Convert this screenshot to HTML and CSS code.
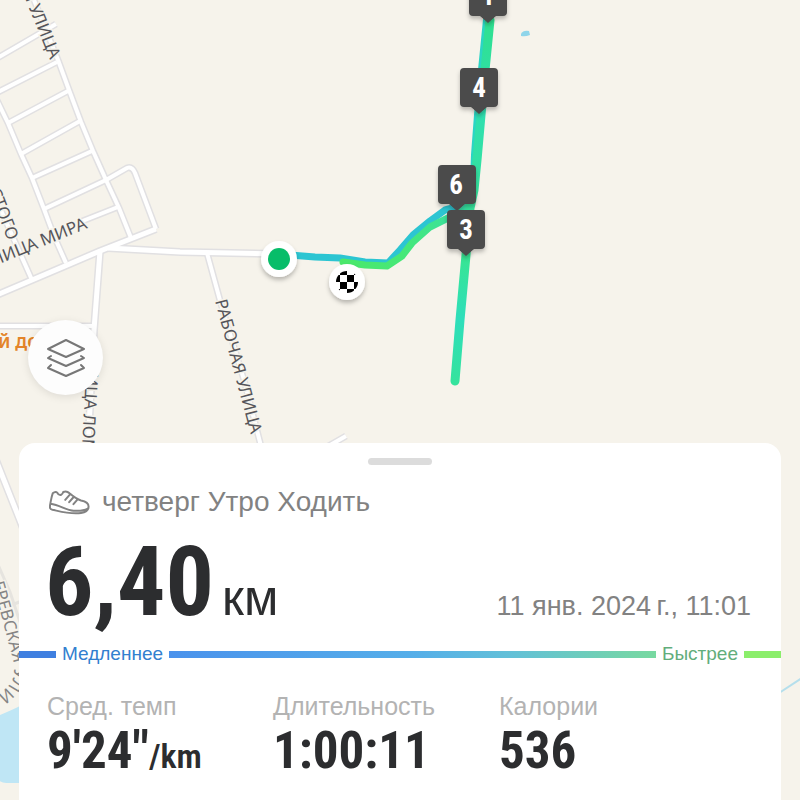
FILE: index.html
```
<!DOCTYPE html>
<html lang="ru">
  <head>
    <meta charset="UTF-8" />
    <meta name="viewport" content="width=device-width, initial-scale=1.0" />
    <title>четверг Утро Ходить</title>
    <link rel="stylesheet" href="styles.css">
  </head>

  <body>
    <main class="screen">
      <svg class="map" viewBox="0 0 800 800" preserveAspectRatio="xMidYMin slice">
        <defs>
          <linearGradient id="main-track" gradientUnits="userSpaceOnUse" x1="0" y1="20" x2="0" y2="385">
            <stop offset="0" stop-color="#2fe08f" />
            <stop offset="0.25" stop-color="#2fdfb0" />
            <stop offset="0.45" stop-color="#34e29f" />
            <stop offset="0.65" stop-color="#38e594" />
            <stop offset="0.82" stop-color="#2edebb" />
            <stop offset="1" stop-color="#35e39c" />
          </linearGradient>
          <linearGradient id="back-track" gradientUnits="userSpaceOnUse" x1="340" y1="0" x2="466" y2="0">
            <stop offset="0" stop-color="#4be86a" />
            <stop offset="0.5" stop-color="#46e878" />
            <stop offset="1" stop-color="#36dfa8" />
          </linearGradient>
          <filter id="shadow" x="-40%" y="-40%" width="180%" height="190%">
            <feDropShadow dx="0" dy="3" stdDeviation="2" flood-color="#000" flood-opacity="0.25" />
          </filter>
          <clipPath id="ball"><circle r="11" /></clipPath>
          <g id="pin" filter="url(#shadow)">
            <path d="M-15 -46H15Q19 -46 19 -42V-11Q19 -7 15 -7H8L0 0L-8 -7H-15Q-19 -7 -19 -11V-42Q-19 -46 -15 -46Z" />
          </g>
          <!-- streets, drawn twice: casing and filling -->
          <g id="streets">
            <path d="M28 -15L58 60L69 90L81 122L93 151L106 180L119 208L131 238" />
            <path d="M-6 60L56 24M-6 94L57 62M8 123L68 91M21 154L80 121M32 178L92 151M44 209L106 180L127 168Q132 166 135 173L156 229M80 222L118 207" />
            <path d="M-6 94L8 123L21 154L32 178L44 209L54 236L66 263M0 208L32 280" />
            <path d="M207 253L221 304L244 380L262 450M325 448L346 436" />
            <path d="M-6 326H92" />
          </g>
          <g id="avenues">
            <path d="M-8 297L65 266L100 251L156 229" />
            <path d="M108 248L180 252L280 254M100 251L94 330L88 446M-8 450L19 518L30 546" />
          </g>
        </defs>

        <path class="water" d="M-5 717Q10 711 20 706L24 783H8Q0 784 -5 776Z" />
        <path class="stream" d="M776 695L805 676" />
        <path class="pond" d="M521 34Q523 30 529 31L530 35Q525 37 521 36Z" />
        <path class="railway" d="M-4 560L10 592L20 622M6 607L22 601" />

        <use href="#streets" class="casing" />
        <use href="#avenues" class="casing wide" />
        <use href="#streets" class="filling" />
        <use href="#avenues" class="filling wide" />

        <g class="street-names">
          <text transform="translate(50 60) rotate(68)" text-anchor="end">Я УЛИЦА</text>
          <text transform="translate(88 228) rotate(-22)" text-anchor="end">ЛИЦА МИРА</text>
          <text transform="translate(8 241) rotate(69)" text-anchor="end">СТОГО</text>
          <text transform="translate(215 301) rotate(75)">РАБОЧАЯ УЛИЦА</text>
          <text transform="translate(86 373) rotate(93)">ИЦА ЛОМ</text>
          <path id="bend" fill="none" d="M-8 583L3 622L11 653C17 670 14 680 7 687L-24 716" />
          <text class="faint"><textPath href="#bend">ЕРЕВСКАЯ УЛИ</textPath></text>
        </g>
        <text class="place" x="-2" y="348">й дом</text>

        <path class="track out" d="M290 255L315 257L340 258L365 262L388 263L400 250L413 235L430 221L445 210L460 206" />
        <path class="track back" d="M343 262L365 265L387 266L402 256L412 243L430 227L450 217L468 206" />
        <path class="track edge" d="M487 20L482 70L478 115L475 155L474 185" />
        <path class="track main" d="M490 20L485 70L481 115L477 160L474 190L470 208L466 255L460 320L455 381" />

        <use href="#pin" x="488" y="23" class="pin" />
        <text class="pin-number" x="488" y="5">1</text>
        <use href="#pin" x="479" y="114" class="pin" />
        <text class="pin-number" x="479" y="97">4</text>
        <use href="#pin" x="457" y="211" class="pin" />
        <text class="pin-number" x="456" y="194">6</text>
        <use href="#pin" x="466" y="256" class="pin" />
        <text class="pin-number" x="466" y="239">3</text>

        <!-- start and finish -->
        <g transform="translate(279 259)">
          <circle class="dot" r="18" filter="url(#shadow)" />
          <circle class="start" r="11" />
        </g>
        <g transform="translate(347 282)">
          <circle class="dot" r="18" filter="url(#shadow)" />
          <g clip-path="url(#ball)">
            <path class="checks" d="M0 -7H7V0H0ZM-7 0H0V7H-7ZM-7 -15H0V-7H-7ZM-15 -7H-7V0H-15ZM7 0H15V7H7ZM0 7H7V15H0ZM7 -15H15V-7H7ZM-15 7H-7V15H-15Z" />
          </g>
        </g>
      </svg>

      <button class="layers" type="button" aria-label="Слои">
        <svg viewBox="0 0 40 40">
          <path d="M20 2L38 11L20 19L2 11ZM5 18L2 20L20 28L38 20L35 18M5 27L2 30L20 38L38 30L35 27" />
        </svg>
      </button>

      <section class="sheet">
        <div class="handle"></div>

        <header class="title">
          <svg class="shoe" viewBox="148 174 124 76">
            <path d="M152 214C149 228 150 232 158 234C185 240 210 248 245 244C260 242 268 236 268 224C268 212 255 208 245 206C232 202 222 194 210 184C204 178 198 177 191 180C188 189 182 191 176 187C173 179 166 178 159 184C155 195 154 205 152 214ZM152 216C180 220 200 235 222 237C240 238 255 238 267 230M197 204L211 188M209 211L222 196M222 217L234 203" />
          </svg>
          <h1>четверг Утро Ходить</h1>
        </header>

        <div class="summary">
          <p class="distance">6,40<span>км</span></p>
          <time datetime="2024-01-11T11:01">11 янв. 2024&#8239;г., 11:01</time>
        </div>

        <div class="pace">
          <i class="bar slow"></i>
          <span class="slower">Медленнее</span>
          <i class="bar middle"></i>
          <span class="faster">Быстрее</span>
          <i class="bar fast"></i>
        </div>

        <dl class="stats">
          <div>
            <dt>Сред. темп</dt>
            <dd>9'24"<small>/km</small></dd>
          </div>
          <div>
            <dt>Длительность</dt>
            <dd>1:00:11</dd>
          </div>
          <div>
            <dt>Калории</dt>
            <dd>536</dd>
          </div>
        </dl>
      </section>
    </main>
  </body>
</html>
```
FILE: styles.css
```
* {
  box-sizing: border-box;
  margin: 0;
}

body {
  font-family: "Liberation Sans", Arial, sans-serif;
  color: #2c2d2f;
  background-color: #f6f3eb;
}

/* the sheet lies over the map, both in the same grid cell */
.screen {
  display: grid;
  position: relative;
  height: 100vh;
  overflow: hidden;
}

.map {
  grid-area: 1 / 1;
  width: 100%;
  height: 100%;
}

.casing,
.filling,
.track {
  fill: none;
  stroke-linejoin: round;
}

.casing {
  stroke: #e1e0e2;
  stroke-width: 7px;
}

.filling {
  stroke: #fff;
  stroke-width: 4px;
}

.casing.wide {
  stroke-width: 8px;
}

.filling.wide {
  stroke-width: 5px;
}

.water {
  fill: #bfe6f5;
}

.pond {
  fill: #8fd5ea;
}

.stream {
  stroke: #b5dfec;
  stroke-width: 2px;
}

.railway {
  fill: none;
  stroke: #e6e4df;
  stroke-width: 3px;
}

.street-names {
  font-family: "Noto Sans", sans-serif;
  font-size: 17px;
  fill: #55555a;
  stroke: #f6f3eb;
  stroke-width: 3px;
  paint-order: stroke;
}

.street-names path {
  stroke: none;
}

.street-names .faint {
  fill: #858585;
}

.place {
  font-family: "Noto Sans", sans-serif;
  font-size: 19px;
  font-weight: 600;
  fill: #e38428;
}

.track {
  stroke-linecap: round;
}

.out {
  stroke: #2cc5d2;
  stroke-width: 7px;
}

.back {
  stroke: url(#back-track);
  stroke-width: 7px;
}

.edge {
  stroke: #2bd5c4;
  stroke-width: 8px;
}

.main {
  stroke: url(#main-track);
  stroke-width: 9px;
}

.pin {
  fill: #4b4b4b;
}

.pin-number {
  font-family: "Roboto Condensed", "Liberation Sans", sans-serif;
  font-size: 27px;
  font-weight: bold;
  text-anchor: middle;
  fill: #fff;
}

.dot {
  fill: #fff;
}

.start {
  fill: #07bd69;
}

.checks {
  fill: #000;
}

.layers {
  position: absolute;
  top: 320px;
  left: 28px;
  display: grid;
  place-items: center;
  width: 75px;
  height: 75px;
  padding: 0;
  border: 0;
  border-radius: 50%;
  background-color: #fdfdfd;
  box-shadow: 0 2px 8px rgba(0, 0, 0, 0.1);
}

.layers svg {
  width: 40px;
  height: 40px;
  fill: none;
  stroke: #777;
  stroke-width: 2px;
  stroke-linecap: round;
  stroke-linejoin: round;
}

.sheet {
  grid-area: 1 / 1;
  align-self: end;
  position: relative;
  margin: 0 19px;
  padding: 15px 0 23px;
  border-radius: 16px 16px 0 0;
  background-color: #fff;
}

.handle {
  width: 64px;
  height: 7px;
  margin: 0 auto 21px;
  border-radius: 4px;
  background-color: #dcdcdc;
}

.title {
  display: flex;
  align-items: center;
  gap: 12px;
  padding: 0 30px;
  color: #828282;
}

.title h1 {
  font-size: 28px;
  font-weight: normal;
  line-height: 32px;
}

.shoe {
  width: 41px;
  height: 25px;
  fill: none;
  stroke: currentColor;
  stroke-width: 6px;
  stroke-linecap: round;
  stroke-linejoin: round;
}

.summary {
  display: flex;
  justify-content: space-between;
  align-items: baseline;
  margin-top: 15px;
  padding: 0 30px 0 26px;
}

.distance,
.stats dd {
  font-family: "Roboto Condensed", "Liberation Sans", sans-serif;
  font-weight: bold;
}

.distance {
  font-size: 96px;
  line-height: 98px;
}

.distance span {
  margin-left: 8px;
  font-family: "Liberation Sans", Arial, sans-serif;
  font-size: 50px;
  font-weight: normal;
  line-height: 50px;
}

.summary time {
  font-size: 27px;
  color: #828282;
}

.pace {
  display: flex;
  align-items: center;
  gap: 6px;
  margin-top: 11px;
  font-size: 19px;
  line-height: 24px;
}

.bar {
  width: 37px;
  height: 7px;
}

.slow {
  background-color: #3f7fe0;
}

.middle {
  flex: 1;
  background: linear-gradient(to right, #4a92ec, #55aee9 50%, #62c0d8 70%, #78d9a0);
}

.fast {
  background-color: #8bee6b;
}

.slower {
  color: #3280cf;
}

.faster {
  color: #62ad7b;
}

.stats {
  display: grid;
  grid-template-columns: repeat(3, 1fr);
  margin-top: 26px;
  padding: 0 56px 0 28px;
}

.stats dt {
  font-size: 25px;
  line-height: 28px;
  color: #b3b3b3;
}

.stats dd {
  margin-top: 5px;
  font-size: 51px;
  line-height: 52px;
}

.stats small {
  font-size: 34px;
  font-weight: 600;
  line-height: 34px;
}
```
